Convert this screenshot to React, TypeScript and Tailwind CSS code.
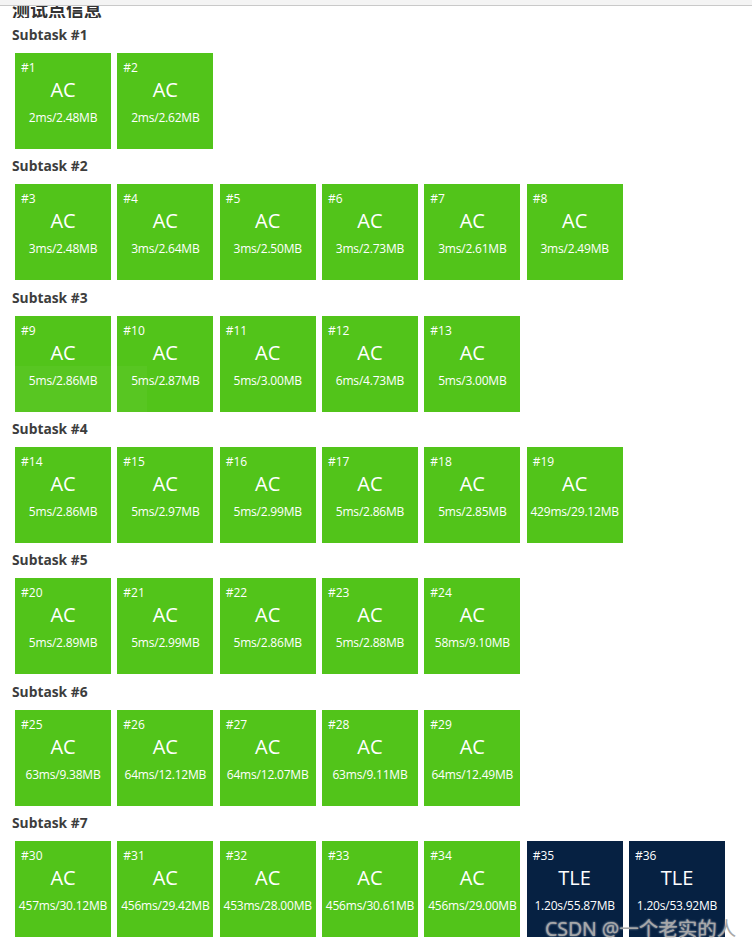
import React from 'react'

type Case = { id: number; status: 'AC' | 'TLE'; info: string }

const subtasks: Case[][] = [
  [
    { id: 1, status: 'AC', info: '2ms/2.48MB' },
    { id: 2, status: 'AC', info: '2ms/2.62MB' },
  ],
  [
    { id: 3, status: 'AC', info: '3ms/2.48MB' },
    { id: 4, status: 'AC', info: '3ms/2.64MB' },
    { id: 5, status: 'AC', info: '3ms/2.50MB' },
    { id: 6, status: 'AC', info: '3ms/2.73MB' },
    { id: 7, status: 'AC', info: '3ms/2.61MB' },
    { id: 8, status: 'AC', info: '3ms/2.49MB' },
  ],
  [
    { id: 9, status: 'AC', info: '5ms/2.86MB' },
    { id: 10, status: 'AC', info: '5ms/2.87MB' },
    { id: 11, status: 'AC', info: '5ms/3.00MB' },
    { id: 12, status: 'AC', info: '6ms/4.73MB' },
    { id: 13, status: 'AC', info: '5ms/3.00MB' },
  ],
  [
    { id: 14, status: 'AC', info: '5ms/2.86MB' },
    { id: 15, status: 'AC', info: '5ms/2.97MB' },
    { id: 16, status: 'AC', info: '5ms/2.99MB' },
    { id: 17, status: 'AC', info: '5ms/2.86MB' },
    { id: 18, status: 'AC', info: '5ms/2.85MB' },
    { id: 19, status: 'AC', info: '429ms/29.12MB' },
  ],
  [
    { id: 20, status: 'AC', info: '5ms/2.89MB' },
    { id: 21, status: 'AC', info: '5ms/2.99MB' },
    { id: 22, status: 'AC', info: '5ms/2.86MB' },
    { id: 23, status: 'AC', info: '5ms/2.88MB' },
    { id: 24, status: 'AC', info: '58ms/9.10MB' },
  ],
  [
    { id: 25, status: 'AC', info: '63ms/9.38MB' },
    { id: 26, status: 'AC', info: '64ms/12.12MB' },
    { id: 27, status: 'AC', info: '64ms/12.07MB' },
    { id: 28, status: 'AC', info: '63ms/9.11MB' },
    { id: 29, status: 'AC', info: '64ms/12.49MB' },
  ],
  [
    { id: 30, status: 'AC', info: '457ms/30.12MB' },
    { id: 31, status: 'AC', info: '456ms/29.42MB' },
    { id: 32, status: 'AC', info: '453ms/28.00MB' },
    { id: 33, status: 'AC', info: '456ms/30.61MB' },
    { id: 34, status: 'AC', info: '456ms/29.00MB' },
    { id: 35, status: 'TLE', info: '1.20s/55.87MB' },
    { id: 36, status: 'TLE', info: '1.20s/53.92MB' },
  ],
]

const Tile = ({ c }: { c: Case }) => (
  <div
    className={
      'w-[96px] h-[96px] flex flex-col text-white pt-[7px] ' +
      (c.status === 'AC' ? 'bg-[#52c41a]' : 'bg-[#062142]')
    }
  >
    <div className="px-[6px] text-[12px] leading-[16px]">#{c.id}</div>
    <div className="mt-[2px] text-center text-[20px] leading-[24px]">{c.status}</div>
    <div className="mt-[8px] text-center text-[12px] leading-[16px] tracking-[-0.2px] whitespace-nowrap">
      {c.info}
    </div>
  </div>
)

const App = () => {
  return (
    <div
      className="relative w-[752px] h-[948px] overflow-hidden bg-white"
      style={{ fontFamily: '"Open Sans", "Noto Sans CJK SC", sans-serif' }}
    >
      <div className="h-[6px] bg-[#f4f4f4] border-b border-[#c9c9c9]" />
      <div className="h-[12px] overflow-hidden flex items-end pl-[12px]">
        <div className="text-[18px] leading-[22px] font-bold text-[#333] -mb-[3px]">测试点信息</div>
      </div>
      <div className="mt-[7px]">
        {subtasks.map((cases, i) => (
          <div key={i} className={i === 0 ? '' : 'mt-[7.33px]'}>
            <div className="pl-[12px] h-[20px] leading-[20px] text-[13.8px] font-bold text-[#3d3d3d]">
              Subtask #{i + 1}
            </div>
            <div className="mt-[8px] pl-[15px] flex gap-x-[6.33px]">
              {cases.map(c => (
                <Tile key={c.id} c={c} />
              ))}
            </div>
          </div>
        ))}
      </div>

      <div className="absolute left-0 top-[366px] w-[147px] h-[47px] bg-white/[0.04]" />

      <div
        className="absolute left-[545px] top-[916px] text-[19.5px] leading-[26px] text-[#a8a8a8] whitespace-nowrap"
        style={{ textShadow: '0 0 2px rgba(255,255,255,0.8)' }}
      >
        CSDN @一个老实的人
      </div>
    </div>
  )
}

export default App
